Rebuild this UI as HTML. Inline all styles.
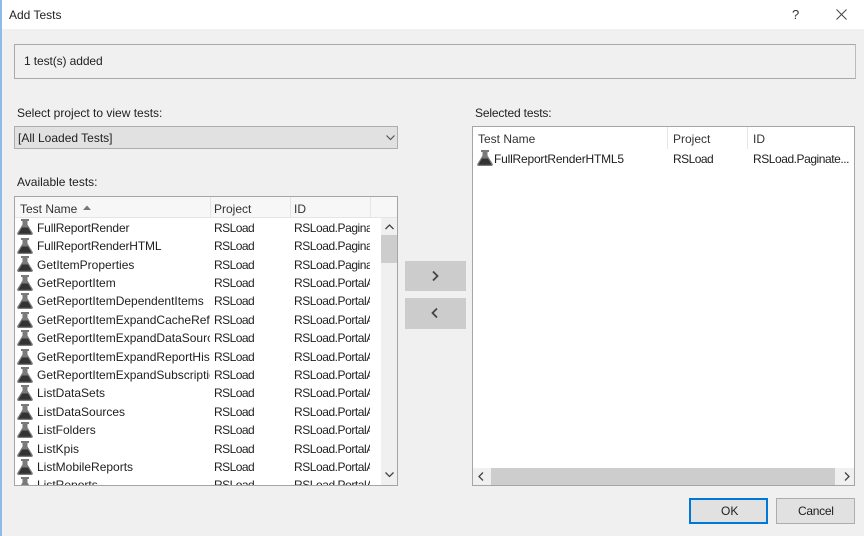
<!DOCTYPE html>
<html><head><meta charset="utf-8"><style>
html,body{margin:0;padding:0}
body{width:864px;height:536px;position:relative;overflow:hidden;background:#f0f0f0;font:12px/16px "Liberation Sans",sans-serif;color:#1e1e1e}
div,span{position:absolute;white-space:nowrap;box-sizing:border-box}
.c{overflow:hidden;height:16px}
.h{color:#333}
.v{width:1px;background:#e5e5e5}
.r{letter-spacing:-.55px}
.i{letter-spacing:-.45px;overflow:hidden;height:16px;width:76px}
.n{letter-spacing:-.15px}
svg{position:absolute;overflow:visible}
</style></head><body>
<svg width="0" height="0" style="position:absolute"><defs><symbol id="f" viewBox="0 0 16 16"><path d="M4 0h8v2h-1.500v3.500L15.600 13.800c.6 1 0 2.200-1.200 2.200H1.600c-1.200 0-1.800-1.200-1.200-2.200L5.500 5.500V2H4z" fill="#7a7a7a"/><path d="M5 8.500h6l3.200 5.500c.2.500 0 .8-.5.800H2.300c-.5 0-.7-.3-.5-.8z" fill="#333"/></symbol></defs></svg>
<div style="left:0;top:0;width:864px;height:29px;background:#fff"></div>
<div style="left:0;top:0;width:2px;height:536px;background:#8fbce6"></div>
<div style="left:9px;top:7px;font-size:12px;color:#222">Add Tests</div>
<div style="left:792px;top:7px;font-size:13px;color:#333">?</div>
<svg style="left:836px;top:9px" width="11" height="11"><path d="M.5.500l10 10M10.500.500l-10 10" stroke="#444" fill="none"/></svg>

<div style="left:14px;top:44px;width:842px;height:35px;border:1px solid #a9a9a9;border-right-color:#bbb"></div>
<div style="left:24px;top:53px;letter-spacing:-.1px">1 test(s) added</div>

<div style="left:17px;top:105px">Select project to view tests:</div>
<div style="left:14px;top:126px;width:384px;height:23px;background:#e1e1e1;border:1px solid #adadad"></div>
<div style="left:18px;top:130px">[All Loaded Tests]</div>
<svg style="left:386px;top:135px" width="9" height="6"><path d="M.5.500l4 4 4-4" stroke="#555" fill="none" stroke-width="1.200"/></svg>

<div style="left:17px;top:174px">Available tests:</div>
<div style="left:14px;top:196px;width:384px;height:290px;background:#fff;border:1px solid #a5a5a5;overflow:hidden"></div>
<div style="left:15px;top:197px;width:382px;height:21px;background:#f7f7f7;border-bottom:1px solid #e5e5e5"></div>
<div class="v" style="left:210px;top:197px;height:21px"></div>
<div class="v" style="left:290px;top:197px;height:21px"></div>
<div class="v" style="left:370px;top:197px;height:21px"></div>
<div class="h" style="left:20px;top:201px">Test Name</div>
<svg style="left:83px;top:205px" width="8" height="5"><path d="M0 5l4-4.500 4 4.500z" fill="#777"/></svg>
<div class="h" style="left:214px;top:201px">Project</div>
<div class="h" style="left:294px;top:201px">ID</div>

<div style="left:15px;top:218px;width:366px;height:267px;overflow:hidden">
<svg style="left:2px;top:1px" width="16" height="16"><use href="#f"/></svg><div class="n" style="left:22px;top:2px">FullReportRender</div><div class="r" style="left:199px;top:2px">RSLoad</div><div class="i" style="left:279px;top:2px">RSLoad.PaginatedReports</div>
<svg style="left:2px;top:20px" width="16" height="16"><use href="#f"/></svg><div class="n" style="left:22px;top:20px">FullReportRenderHTML</div><div class="r" style="left:199px;top:20px">RSLoad</div><div class="i" style="left:279px;top:20px">RSLoad.PaginatedReports</div>
<svg style="left:2px;top:38px" width="16" height="16"><use href="#f"/></svg><div style="left:22px;top:39px">GetItemProperties</div><div class="r" style="left:199px;top:39px">RSLoad</div><div class="i" style="left:279px;top:39px">RSLoad.PaginatedReports</div>
<svg style="left:2px;top:57px" width="16" height="16"><use href="#f"/></svg><div style="left:22px;top:57px">GetReportItem</div><div class="r" style="left:199px;top:57px">RSLoad</div><div class="i" style="left:279px;top:57px">RSLoad.PortalApis</div>
<svg style="left:2px;top:75px" width="16" height="16"><use href="#f"/></svg><div style="left:22px;top:75px">GetReportItemDependentItems</div><div class="r" style="left:199px;top:75px">RSLoad</div><div class="i" style="left:279px;top:75px">RSLoad.PortalApis</div>
<svg style="left:2px;top:94px" width="16" height="16"><use href="#f"/></svg><div class="c" style="left:22px;top:94px;width:173px">GetReportItemExpandCacheRefresh</div><div class="r" style="left:199px;top:94px">RSLoad</div><div class="i" style="left:279px;top:94px">RSLoad.PortalApis</div>
<svg style="left:2px;top:112px" width="16" height="16"><use href="#f"/></svg><div class="c" style="left:22px;top:112px;width:173px">GetReportItemExpandDataSources</div><div class="r" style="left:199px;top:112px">RSLoad</div><div class="i" style="left:279px;top:112px">RSLoad.PortalApis</div>
<svg style="left:2px;top:131px" width="16" height="16"><use href="#f"/></svg><div class="c" style="left:22px;top:131px;width:173px">GetReportItemExpandReportHistory</div><div class="r" style="left:199px;top:131px">RSLoad</div><div class="i" style="left:279px;top:131px">RSLoad.PortalApis</div>
<svg style="left:2px;top:149px" width="16" height="16"><use href="#f"/></svg><div class="c" style="left:22px;top:149px;width:173px">GetReportItemExpandSubscriptions</div><div class="r" style="left:199px;top:149px">RSLoad</div><div class="i" style="left:279px;top:149px">RSLoad.PortalApis</div>
<svg style="left:2px;top:167px" width="16" height="16"><use href="#f"/></svg><div style="left:22px;top:167px">ListDataSets</div><div class="r" style="left:199px;top:167px">RSLoad</div><div class="i" style="left:279px;top:167px">RSLoad.PortalApis</div>
<svg style="left:2px;top:186px" width="16" height="16"><use href="#f"/></svg><div style="left:22px;top:186px">ListDataSources</div><div class="r" style="left:199px;top:186px">RSLoad</div><div class="i" style="left:279px;top:186px">RSLoad.PortalApis</div>
<svg style="left:2px;top:204px" width="16" height="16"><use href="#f"/></svg><div style="left:22px;top:204px">ListFolders</div><div class="r" style="left:199px;top:204px">RSLoad</div><div class="i" style="left:279px;top:204px">RSLoad.PortalApis</div>
<svg style="left:2px;top:223px" width="16" height="16"><use href="#f"/></svg><div style="left:22px;top:223px">ListKpis</div><div class="r" style="left:199px;top:223px">RSLoad</div><div class="i" style="left:279px;top:223px">RSLoad.PortalApis</div>
<svg style="left:2px;top:241px" width="16" height="16"><use href="#f"/></svg><div style="left:22px;top:241px">ListMobileReports</div><div class="r" style="left:199px;top:241px">RSLoad</div><div class="i" style="left:279px;top:241px">RSLoad.PortalApis</div>
<svg style="left:2px;top:259px" width="16" height="16"><use href="#f"/></svg><div style="left:22px;top:259px">ListReports</div><div class="r" style="left:199px;top:259px">RSLoad</div><div class="i" style="left:279px;top:259px">RSLoad.PortalApis</div>
</div>
<div style="left:381px;top:218px;width:16px;height:267px;background:#f0f0f0"></div>
<div style="left:381px;top:235px;width:16px;height:28px;background:#cdcdcd"></div>
<svg style="left:385px;top:224px" width="9" height="6"><path d="M.5 5l4-4 4 4" stroke="#444" fill="none" stroke-width="1.300"/></svg>
<svg style="left:385px;top:472px" width="9" height="6"><path d="M.5.500l4 4 4-4" stroke="#444" fill="none" stroke-width="1.300"/></svg>

<div style="left:405px;top:261px;width:61px;height:30px;background:#cccccc"></div>
<svg style="left:432px;top:271px" width="7" height="10"><path d="M1 .500l4.500 4.500L1 9.500" stroke="#444" stroke-width="1.800" fill="none"/></svg>
<div style="left:405px;top:298px;width:61px;height:31px;background:#cccccc"></div>
<svg style="left:431px;top:308px" width="7" height="10"><path d="M6 .500L1.500 5 6 9.500" stroke="#444" stroke-width="1.800" fill="none"/></svg>

<div style="left:475px;top:105px;letter-spacing:-.15px">Selected tests:</div>
<div style="left:472px;top:126px;width:383px;height:360px;background:#fff;border:1px solid #a5a5a5"></div>
<div class="v" style="left:667px;top:127px;height:22px"></div>
<div class="v" style="left:747px;top:127px;height:22px"></div>
<div class="h" style="left:478px;top:131px">Test Name</div>
<div class="h" style="left:673px;top:131px">Project</div>
<div class="h" style="left:753px;top:131px">ID</div>
<svg style="left:477px;top:150px" width="16" height="16"><use href="#f"/></svg>
<div style="left:494px;top:151px;letter-spacing:-.2px">FullReportRenderHTML5</div>
<div class="r" style="left:673px;top:151px">RSLoad</div>
<div style="left:753px;top:151px;letter-spacing:-.45px">RSLoad.Paginate...</div>
<div style="left:473px;top:468px;width:381px;height:17px;background:#f0f0f0"></div>
<div style="left:491px;top:468px;width:344px;height:17px;background:#cdcdcd"></div>
<svg style="left:478px;top:472px" width="6" height="9"><path d="M5 .500l-4 4 4 4" stroke="#444" fill="none" stroke-width="1.300"/></svg>
<svg style="left:844px;top:472px" width="6" height="9"><path d="M1 .500l4 4-4 4" stroke="#444" fill="none" stroke-width="1.300"/></svg>

<div style="left:689px;top:498px;width:79px;height:26px;background:#e1e1e1;border:2px solid #0078d7"></div>
<div style="left:721px;top:503px">OK</div>
<div style="left:776px;top:498px;width:79px;height:26px;background:#e1e1e1;border:1px solid #adadad"></div>
<div style="left:798px;top:503px;letter-spacing:-.3px">Cancel</div>
</body></html>
